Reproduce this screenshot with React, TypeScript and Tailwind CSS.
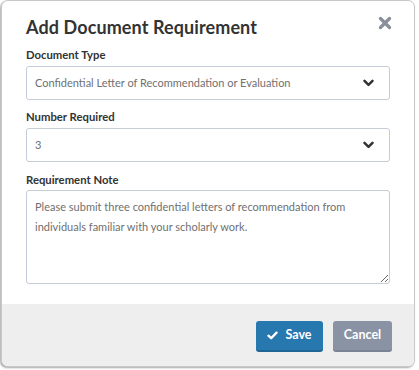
import React from "react";

function Chevron() {
  return (
    <svg width="11" height="8" viewBox="0 0 11 8" className="shrink-0">
      <path d="M1.5 1.8 L5.5 5.8 L9.5 1.8" fill="none" stroke="#333" strokeWidth="2.5" strokeLinecap="round" strokeLinejoin="round" />
    </svg>
  );
}

export default function App() {
  return (
    <div className="w-[419px] h-[370px] bg-white" style={{ fontFamily: "Lato, 'Open Sans', sans-serif" }}>
      <div className="ml-[1px] w-[414px] h-[367px] rounded-[7px] border border-[#c9c9c9] bg-white flex flex-col overflow-hidden shadow-[-1px_1px_2px_rgba(0,0,0,0.35)]">
        <div className="flex-1 px-[24px] pt-[14px]">
          <div className="flex items-start justify-between">
            <h1 className="text-[18px] font-bold text-[#333] leading-[24px] tracking-[0.1px]">Add Document Requirement</h1>
            <svg width="14" height="14" viewBox="0 0 14 14" className="mt-[1px] mr-[-2px]">
              <path d="M2.5 2.5 L11.5 11.5 M11.5 2.5 L2.5 11.5" stroke="#8a909b" strokeWidth="3.4" strokeLinecap="round" />
            </svg>
          </div>
          <div className="mt-[8px] text-[11.3px] font-bold text-[#333] leading-[16px]">Document Type</div>
          <div className="mt-[3px] h-[34px] border border-[#c5cdd8] rounded-[3px] flex items-center justify-between pl-[8px] pr-[15px]">
            <span className="text-[11px] text-[#707070]">Confidential Letter of Recommendation or Evaluation</span>
            <Chevron />
          </div>
          <div className="mt-[9px] text-[11.3px] font-bold text-[#333] leading-[16px]">Number Required</div>
          <div className="mt-[3px] h-[34px] border border-[#c5cdd8] rounded-[3px] flex items-center justify-between pl-[8px] pr-[15px]">
            <span className="text-[11px] text-[#707070]">3</span>
            <Chevron />
          </div>
          <div className="mt-[10px] text-[11.3px] font-bold text-[#333] leading-[16px]">Requirement Note</div>
          <textarea
            className="mt-[2px] block w-full h-[94px] border border-[#c5cdd8] rounded-[3px] px-[8px] pt-[6px] text-[11px] leading-[20px] text-[#707070] outline-none resize-y"
            defaultValue="Please submit three confidential letters of recommendation from individuals familiar with your scholarly work."
          />
        </div>
        <div className="h-[62px] bg-[#eeeeee] flex items-start justify-end gap-[10px] px-[22px] pt-[17px]">
          <button className="h-[31px] w-[67px] rounded-[3px] bg-[#2878b0] border-b-2 border-[#1f6595] text-white font-bold text-[12.5px] flex items-center justify-center gap-[7px]">
            <svg width="11" height="9" viewBox="0 0 12 10">
              <path d="M1.5 5.2 L4.5 8 L10.5 1.8" fill="none" stroke="white" strokeWidth="2.6" strokeLinecap="round" strokeLinejoin="round" />
            </svg>
            Save
          </button>
          <button className="h-[31px] w-[59px] rounded-[3px] bg-[#8a93a4] border-b-2 border-[#7a8394] text-white font-bold text-[12.5px]">
            Cancel
          </button>
        </div>
      </div>
    </div>
  );
}
